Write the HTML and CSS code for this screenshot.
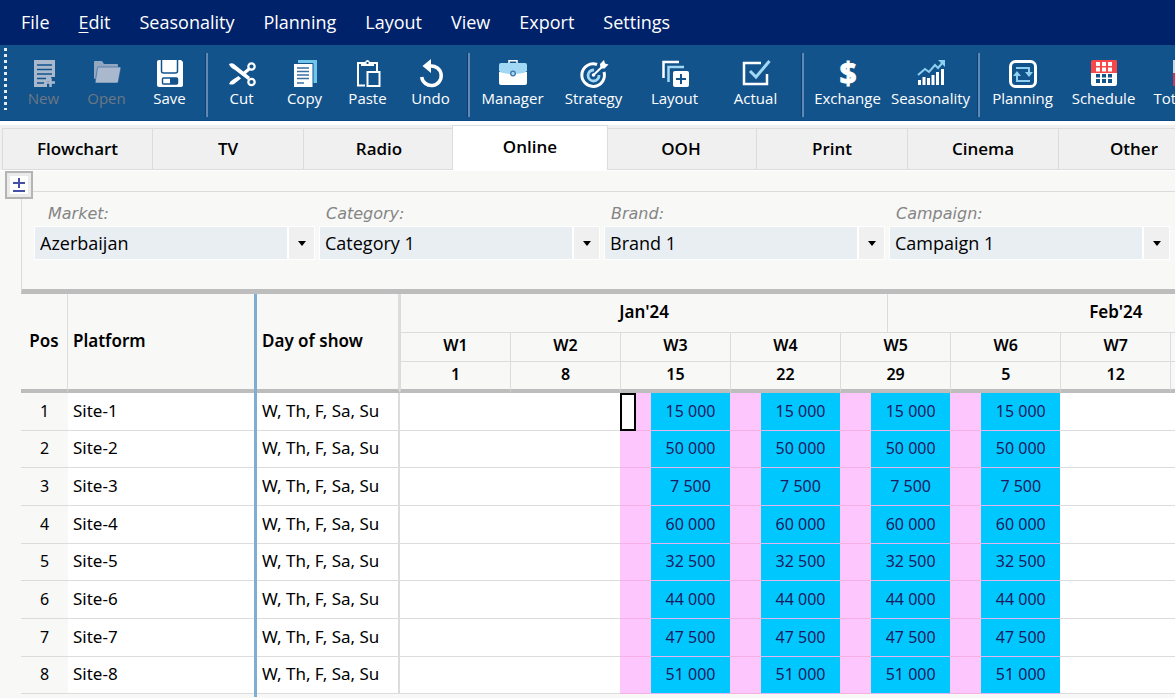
FILE: index.html
```html
<!DOCTYPE html>
<html lang="en">
<head>
    <meta charset="UTF-8">
    <meta name="viewport" content="width=device-width, initial-scale=1.0">
    <title>Media Planner</title>
    <link rel="stylesheet" href="styles.css">
</head>
<body>
    <nav class="menu-bar">
        <button>File</button>
        <button><u>E</u>dit</button>
        <button>Seasonality</button>
        <button>Planning</button>
        <button>Layout</button>
        <button>View</button>
        <button>Export</button>
        <button>Settings</button>
    </nav>

    <div class="toolbar">
        <div class="grip"></div>
        <div class="tool-group small">
            <button class="tool" disabled>
                <svg viewBox="0 0 30 30"><path fill="#a9b8cd" d="M5 1h21v17h-4v4h-4v6H5z"/><path stroke="#13538c" stroke-width="1.5" d="M8 6h15M8 10.500h15M8 15h15M8 19.500h9M8 24h7"/><path stroke="#a9b8cd" stroke-width="2.500" d="M21.500 19v9M17 23.500h9"/></svg>
                <span>New</span>
            </button>
            <button class="tool" disabled>
                <svg viewBox="0 0 30 30"><path fill="#93a7c1" d="M2 3q0-1 1-1h7l2 3h13q1 0 1 1v2H7L4 20H3q-1 0-1-1z"/><path fill="#a9b8cd" stroke="#13538c" stroke-width=".5" d="M6.500 8H28q1 0 .8 1l-2.600 14q-.2 1-1.200 1H4q-1 0-.8-1L5.500 9q.2-1 1-1z"/></svg>
                <span>Open</span>
            </button>
            <button class="tool">
                <svg viewBox="0 0 30 30"><path fill="#fff" d="M4 1h22l2 2v23q0 2-2 2H4q-2 0-2-2V3q0-2 2-2z"/><path fill="none" stroke="#13538c" stroke-width="1.500" d="M6.500 1v11q0 2 2 2h12q2 0 2-2V1"/><path fill="#fff" stroke="#13538c" stroke-width="1.500" d="M8.500 19h13q1 0 1 1v4q0 1-1 1h-13q-1 0-1-1v-4q0-1 1-1z"/><path fill="#13538c" d="M15 19h7v6h-7z"/></svg>
                <span>Save</span>
            </button>
        </div>
        <div class="tool-group small">
            <button class="tool">
                <svg viewBox="0 0 30 30"><path fill="#fff" d="M2 5q3-1.500 5 0l16 13-2 3L8 11Q3 8.500 2 5zM2 25q3 1 5 0l7-5.500-2.500-2.500L6 20.500Q3 22 2 25zM16 13l6-5 2 2.500-6 5z"/><g fill="none" stroke="#fff" stroke-width="2.200"><circle cx="24.500" cy="7.500" r="3.200"/><circle cx="24.500" cy="23" r="3.200"/></g></svg>
                <span>Cut</span>
            </button>
            <button class="tool">
                <svg viewBox="0 0 30 30"><path fill="#6fc5ea" d="M8 1h19v23H8z"/><path fill="#fff" stroke="#13538c" d="M3.500 4.500h19.500v24H3.500z"/><path stroke="#3b6ea3" stroke-width="1.500" d="M7 9h12M7 12.500h12M7 16h12M7 19.500h12M7 24h7"/></svg>
                <span>Copy</span>
            </button>
            <button class="tool">
                <svg viewBox="0 0 30 30"><g fill="none" stroke="#fff" stroke-width="2"><path d="M12 26.500H5V4h19v8"/><path fill="#13538c" d="M14.500 13h12v14h-12z"/></g><path fill="#fff" d="M8 7V3.500h4Q12.500 1 14.500 1T17 3.500h4V7z"/><path fill="#13538c" d="M13.500 3h2v2h-2z"/></svg>
                <span>Paste</span>
            </button>
            <button class="tool">
                <svg viewBox="0 0 30 30"><path fill="none" stroke="#fff" stroke-width="3.500" d="M14 7a9.800 9.800 0 1 1-8.300 11"/><path fill="#fff" d="M15 0v14L6.500 7z"/></svg>
                <span>Undo</span>
            </button>
        </div>
        <div class="tool-group medium">
            <button class="tool">
                <svg viewBox="0 0 30 30"><path fill="none" stroke="#fff" stroke-width="1.500" d="M11 5V1.800h8V5"/><path fill="#fff" d="M1 13h28v11q0 2-2 2H3q-2 0-2-2z"/><path fill="#a3d8f4" d="M3 4h24q2 0 2 2v6q-3 3-14 3T1 12V6q0-2 2-2z"/><circle cx="15" cy="14.500" r="2.300" fill="#a3d8f4" stroke="#3977ad" stroke-width="1.300"/></svg>
                <span>Manager</span>
            </button>
            <button class="tool">
                <svg viewBox="0 0 30 30"><g fill="none"><path stroke="#fff" stroke-width="3" d="M18 5.500A11.300 11.300 0 1 0 25 13"/><path stroke="#a3d8f4" stroke-width="2.800" d="M15 11a5.500 5.500 0 1 0 5 5"/><path stroke="#fff" stroke-width="2" d="M14.500 16L25 6"/></g><path fill="#fff" d="M21 5l4-4 1 3.500 3.500 1-4 4h-4z"/><circle cx="14.500" cy="16" r="1.800" fill="#fff"/></svg>
                <span>Strategy</span>
            </button>
            <button class="tool">
                <svg viewBox="0 0 30 30"><g fill="none" stroke-width="2.500"><path stroke="#fff" d="M3.500 19V3H19"/><path stroke="#a3d8f4" d="M8.500 23V8H24"/></g><rect x="13" y="12" width="16" height="16" rx="2" fill="#fff"/><path stroke="#13538c" stroke-width="2" d="M21 15v10M16 20h10"/></svg>
                <span>Layout</span>
            </button>
            <button class="tool">
                <svg viewBox="0 0 30 30"><path fill="none" stroke="#fff" stroke-width="2.500" d="M20 4H3v21h23V15"/><path fill="none" stroke="#a3d8f4" stroke-width="3" d="M9 12l6 6L28.500 2"/></svg>
                <span>Actual</span>
            </button>
        </div>
        <div class="tool-group large">
            <button class="tool">
                <svg viewBox="0 0 30 30"><text x="15" y="25" class="dollar">$</text></svg>
                <span>Exchange</span>
            </button>
            <button class="tool">
                <svg viewBox="0 0 30 30"><path stroke="#fff" stroke-width="3" d="M3.500 26v-5M8 26v-8M12.500 26v-7M17 26V16M21.500 26V13M26.500 26V10"/><path fill="none" stroke="#8fd0f0" stroke-width="2" d="M2 16l7-6 4 3 6-7 3 3 6-7"/><path fill="#8fd0f0" d="M22 1h7v7z"/></svg>
                <span>Seasonality</span>
            </button>
        </div>
        <div class="tool-group medium">
            <button class="tool">
                <svg viewBox="0 0 30 30"><rect x="2.500" y="2.500" width="25" height="25" rx="5" fill="none" stroke="#fff" stroke-width="3"/><path fill="none" stroke="#8fd0f0" stroke-width="2" d="M8 9h13v6M22 22H9v-7"/><path fill="#8fd0f0" d="M17 13h8l-4 5zM5 17h8l-4-5z"/></svg>
                <span>Planning</span>
            </button>
            <button class="tool">
                <svg viewBox="0 0 30 30"><path fill="#f8474b" d="M4 1h23q1 0 1 1v12H2V3q0-2 2-2z"/><path fill="#fff" d="M2 14h26v11q0 2-2 2H4q-2 0-2-2zM7 3h4v4H7zM13 3h4v4h-4zM19 3h4v4h-4zM7 8.500h4v4H7zM13 8.500h4v4h-4zM19 8.500h4v4h-4z"/><path fill="#13538c" d="M7 15h4v3.500H7zM13 15h4v3.500h-4zM19 15h4v3.500h-4zM7 20h4v4H7zM13 20h4v4h-4zM19 20h4v4h-4z"/></svg>
                <span>Schedule</span>
            </button>
            <button class="tool wide">
                <svg viewBox="0 0 30 30"><path fill="#c9d5e4" d="M0 1h30v13H0z"/><path fill="#c8375a" d="M0 14h30v13H0z"/></svg>
                <span>Total Plan</span>
            </button>
        </div>
    </div>

    <div class="tabs" role="tablist">
        <button class="tab" role="tab">Flowchart</button>
        <button class="tab" role="tab">TV</button>
        <button class="tab" role="tab">Radio</button>
        <button class="tab active" role="tab" aria-selected="true">Online</button>
        <button class="tab" role="tab">OOH</button>
        <button class="tab" role="tab">Print</button>
        <button class="tab" role="tab">Cinema</button>
        <button class="tab" role="tab">Other</button>
    </div>

    <main class="workspace">
        <button class="toggle-filters" aria-label="Toggle filters">
            <svg viewBox="0 0 12 14"><path stroke="#4350a8" stroke-width="2" d="M6 0v10M0 5h12M0 13h12"/></svg>
        </button>
        <section class="filters">
            <div class="field">
                <label for="market">Market:</label>
                <div class="combo"><select id="market"><option>Azerbaijan</option></select></div>
            </div>
            <div class="field">
                <label for="category">Category:</label>
                <div class="combo"><select id="category"><option>Category 1</option></select></div>
            </div>
            <div class="field">
                <label for="brand">Brand:</label>
                <div class="combo"><select id="brand"><option>Brand 1</option></select></div>
            </div>
            <div class="field">
                <label for="campaign">Campaign:</label>
                <div class="combo"><select id="campaign"><option>Campaign 1</option></select></div>
            </div>
        </section>

        <table class="plan">
            <colgroup id="plan-cols">
                <col class="col-pos">
                <col class="col-platform">
                <col class="col-days">
            </colgroup>
            <thead>
                <tr class="months">
                    <th rowspan="3">Pos</th>
                    <th rowspan="3" class="platform">Platform</th>
                    <th rowspan="3" class="days">Day of show</th>
                    <th colspan="23" class="period">Jan'24</th>
                    <th colspan="21" class="period">Feb'24</th>
                    <th class="period"></th>
                </tr>
                <tr class="weeks" id="weeks"></tr>
                <tr class="dates" id="dates"></tr>
            </thead>
            <tbody id="plan-body"></tbody>
        </table>
    </main>

    <script>
        const weekStarts = [1, 8, 15, 22, 29, 5, 12, 19, 26];
        const budgets = ['15 000', '50 000', '7 500', '60 000', '32 500', '44 000', '47 500', '51 000'];
        const firstWeek = 3;
        const lastWeek = 6;

        // Every week is split into Mon, Tue, Wed, Thu and Fri-Sun columns
        const dayColumns = ['day', 'tue', 'day', 'day', 'rest'];

        const cols = document.getElementById('plan-cols');
        const weeks = document.getElementById('weeks');
        const dates = document.getElementById('dates');
        const body = document.getElementById('plan-body');

        weekStarts.forEach((date, i) => {
            cols.innerHTML += dayColumns.map(name => `<col class="col-${name}">`).join('');
            weeks.innerHTML += `<th colspan="5" class="period">W${i + 1}</th>`;
            dates.innerHTML += `<th colspan="5" class="period">${date}</th>`;
        });

        budgets.forEach((budget, row) => {
            let cells = `<td class="pos">${row + 1}</td>
                <td class="platform">Site-${row + 1}</td>
                <td class="days">W, Th, F, Sa, Su</td>`;
            for (let week = 1; week <= weekStarts.length; week++) {
                if (week < firstWeek || week > lastWeek) {
                    cells += '<td colspan="5"></td>';
                } else if (row === 0 && week === firstWeek) {
                    cells += `<td class="selected"></td><td class="off"></td><td colspan="3" class="budget">${budget}</td>`;
                } else {
                    cells += `<td colspan="2" class="off"></td><td colspan="3" class="budget">${budget}</td>`;
                }
            }
            body.innerHTML += `<tr>${cells}</tr>`;
        });
    </script>
</body>
</html>
```
FILE: styles.css
```css
:root {
    --menu-bg: #00226b;
    --toolbar-bg: #13538c;
    --panel-bg: #f8f8f7;
    --line: #dcdcdc;
    --thick-line: #bdbdbd;
    --freeze-line: #7eaed3;
    --field-bg: #e9eef3;
    --off-bg: #fdc7fd;
    --budget-bg: #00c8ff;
}

* { box-sizing: border-box; }

body {
    margin: 0;
    height: 100vh;
    overflow: hidden;
    display: flex;
    flex-direction: column;
    background-color: #fff;
    color: #000;
    font-family: "Noto Sans", "Open Sans", sans-serif;
    font-size: 16px;
}
button {
    border: none;
    padding: 0;
    background: none;
    color: inherit;
    font: inherit;
    white-space: nowrap;
}

/* Menu */
.menu-bar {
    display: flex;
    flex: none;
    gap: 29px;
    height: 45px;
    padding: 0 21px 2px;
    background-color: var(--menu-bg);
    color: #fff;
    font-family: "Open Sans", sans-serif;
    font-size: 18px;
}
.menu-bar u { text-underline-offset: 3px; }

/* Toolbar */
.toolbar {
    display: flex;
    flex: none;
    height: 76px;
    padding: 0 0 0 4px;
    overflow: hidden;
    background-color: var(--toolbar-bg);
    border-bottom: 1px solid #0b4a86;
    color: #fff;
    font-family: "Open Sans", sans-serif;
    font-size: 15px;
}
.grip {
    flex: none;
    width: 3px;
    height: 62px;
    margin: 3px 5px 0 0;
    background: repeating-linear-gradient(#e4ecf5 0 3px, transparent 3px 6px);
}
.tool-group {
    display: flex;
    flex: none;
    height: 64px;
    margin-top: 8px;
    padding-right: 6px;
}
.tool-group + .tool-group {
    border-left: 2px solid #6289b5;
    box-shadow: -1px 0 #0c3f73;
    padding-left: 2px;
}
.tool {
    display: flex;
    flex-direction: column;
    align-items: center;
    padding-top: 6px;
    line-height: 18px;
}
.tool:disabled { color: #6c7883; }
.tool svg { width: 30px; height: 30px; overflow: visible; }
.small .tool { width: 63px; }
.medium .tool { width: 81px; }
.large .tool { width: 83px; }
.medium .wide { width: 88px; }
.tool-group.small:nth-child(2) { padding-right: 5px; }
.dollar {
    fill: #fff;
    stroke: #fff;
    font-family: "Open Sans", sans-serif;
    font-size: 30px;
    font-weight: bold;
    line-height: 30px;
    text-anchor: middle;
}

/* Tabs */
.tabs {
    display: flex;
    flex: none;
    align-items: flex-end;
    height: 49px;
    padding-left: 2px;
    overflow: hidden;
    background: linear-gradient(#fff 4px, #f0f0f0 4px);
}
.tab {
    flex: none;
    width: 151px;
    height: 42px;
    padding-bottom: 2px;
    background-color: #f0f0f0;
    border: 1px solid var(--line);
    border-right: none;
    font-family: "Open Sans", sans-serif;
    font-size: 17px;
    font-weight: 600;
}
.tab:first-child { width: 150px; }
.tab.active {
    width: 156px;
    height: 45px;
    margin: 0 -3px 0 -2px;
    padding-bottom: 4px;
    z-index: 1;
    background-color: #fff;
    border-right: 1px solid var(--line);
    border-bottom: none;
}

/* Workspace */
.workspace {
    position: relative;
    flex: 1;
    padding: 20px 0 0 21px;
    overflow: hidden;
    background-color: var(--panel-bg);
    border-top: 1px solid #fff;
}
.toggle-filters {
    position: absolute;
    left: 5px;
    top: 0;
    width: 28px;
    height: 28px;
    background-color: #fff;
    border: 2px solid #b4b4b4;
    box-shadow: inset 0 0 0 3px #ebebeb;
}
.toggle-filters svg { display: block; width: 12px; height: 14px; margin: auto; }

.filters {
    display: flex;
    gap: 4px;
    height: 103px;
    padding: 10px 0 0 12px;
    border: 1px solid var(--line);
    border-right: none;
    border-bottom: 5px solid var(--thick-line);
}
.field { flex: none; width: 281px; }
.field label {
    display: block;
    height: 24px;
    padding-left: 7px;
    color: #858585;
    font-family: "DejaVu Sans", sans-serif;
    font-size: 16px;
    font-style: italic;
    line-height: 24px;
}
.field:first-child label { padding-left: 14px; }
.combo {
    position: relative;
    height: 34px;
    border: 1px solid #fff;
}
.combo::after {
    content: "";
    position: absolute;
    right: 8px;
    top: 14px;
    border: 4px solid transparent;
    border-top: 5px solid #000;
    border-bottom: none;
    pointer-events: none;
}
.combo select {
    appearance: none;
    width: 100%;
    height: 32px;
    padding: 0 30px 0 5px;
    border: none;
    border-radius: 0;
    background: linear-gradient(to left, #f0f0f0 25px, #fff 25px 27px, var(--field-bg) 27px);
    color: #000;
    font-family: "Open Sans", sans-serif;
    font-size: 18px;
}

/* Plan grid */
.plan {
    width: 1369px;
    table-layout: fixed;
    border-collapse: separate;
    border-spacing: 0;
    line-height: 20px;
}
.col-pos { width: 47px; }
.col-platform { width: 189px; }
.col-days { width: 143px; }
.col-day { width: 16px; }
.col-tue { width: 15px; }
.col-rest { width: 47px; }

.plan th, .plan td { padding: 0 0 2px; text-align: center; }
.plan th {
    border-right: 1px solid var(--line);
    border-bottom: 4px solid var(--thick-line);
    font-weight: 600;
    font-size: 17px;
}
.plan th.period {
    border-left: 1px solid var(--line);
    border-right: none;
    border-bottom: 1px solid var(--line);
}
.plan .dates th.period { border-bottom: 4px solid var(--thick-line); }
.months { height: 39px; }
.weeks { height: 29px; }
.dates { height: 31px; }
.plan .weeks th, .plan .dates th { padding-bottom: 4px; font-size: 16px; }

.plan td {
    background-color: #fff;
    border-bottom: 1px solid var(--line);
}
.plan tbody tr { height: 38px; }
.plan tbody tr:nth-child(3n+2) { height: 37px; }
.plan .platform {
    position: relative;
    padding-left: 5px;
    border-right: none;
    text-align: left;
}
/* Frozen column divider, drawn over the row lines */
.plan .platform::after {
    content: "";
    position: absolute;
    top: 0;
    right: 0;
    bottom: -4px;
    width: 3px;
    background-color: var(--freeze-line);
}
.plan .days {
    padding-left: 5px;
    border-right: 2px solid var(--line);
    text-align: left;
}
.plan td.platform, .plan td.days { font-size: 17px; }
.plan td.pos { background-color: var(--panel-bg); }
.plan td.off { background-color: var(--off-bg); border-bottom-color: #f5b0e6; }
.plan td.budget {
    background-color: var(--budget-bg);
    border-bottom-color: #e0b4ee;
    color: #1c1a5e;
}
.plan td.selected {
    border: 2px solid #000;
}
```
